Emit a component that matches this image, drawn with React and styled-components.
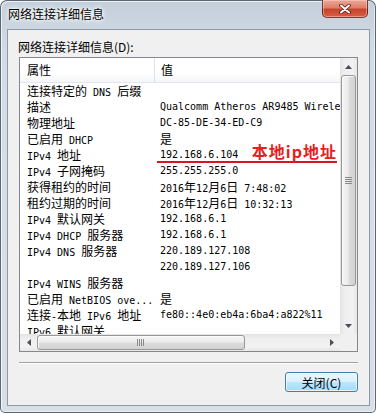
import React from 'react'
import styled, { createGlobalStyle } from 'styled-components'

const GlobalStyle = createGlobalStyle`
  html, body {
    margin: 0;
    padding: 0;
    background: #ffffff;
  }
  * {
    box-sizing: border-box;
  }
`

const CJK = '"Noto Sans CJK SC", "Noto Sans", sans-serif'
const MONO = '"DejaVu Sans Mono", "Liberation Mono", monospace'

const Window = styled.div`
  width: 376px;
  height: 413px;
  display: flex;
  flex-direction: column;
  padding: 0 5px 6px 6px;
  border: 1px solid rgba(52, 64, 78, 0.75);
  border-radius: 7px 7px 5px 5px;
  background: linear-gradient(180deg, #c3cfdb 0%, #d3dce6 12%, #d8dfe7 100%);
  box-shadow: inset 1px 1px 0 rgba(255, 255, 255, 0.7),
    inset -1px -1px 0 rgba(255, 255, 255, 0.5);
`

const TitleBar = styled.div`
  height: 28px;
  flex: none;
  display: flex;
  justify-content: space-between;
  align-items: flex-start;
`

const Title = styled.div`
  font-family: ${CJK};
  font-size: 12px;
  line-height: 26px;
  padding-left: 1px;
  color: #000;
  text-shadow: 0 0 6px #fff, 0 0 4px #fff, 0 0 2px #fff;
`

const CloseButton = styled.div`
  width: 46px;
  height: 18px;
  margin-right: 2px;
  margin-top: -1px;
  display: flex;
  align-items: center;
  justify-content: center;
  border: 1px solid rgba(70, 20, 14, 0.7);
  border-top: none;
  border-radius: 0 0 5px 5px;
  background: linear-gradient(
    180deg,
    #eaa898 0%,
    #de7f6a 45%,
    #c8442c 55%,
    #d65e44 100%
  );
  box-shadow: inset 0 0 0 1px rgba(255, 220, 210, 0.45);
`

const Client = styled.div`
  flex: 1;
  display: flex;
  flex-direction: column;
  align-items: stretch;
  padding: 9px 11px 13px 11px;
  background: #f0f0f0;
  border: 1px solid #8c9aa8;
`

const GroupLabel = styled.div`
  font-family: ${CJK};
  font-size: 12px;
  line-height: 16px;
  height: 16px;
  margin-left: -1px;
  color: #000;
`

const ListBox = styled.div`
  margin-top: 2px;
  height: 295px;
  display: grid;
  grid-template-columns: 1fr 17px;
  grid-template-rows: 1fr 17px;
  border: 1px solid #828790;
  background: #fff;
`

const ListContent = styled.div`
  display: flex;
  flex-direction: column;
  overflow: hidden;
  min-width: 0;
`

const Header = styled.div`
  height: 25px;
  flex: none;
  display: flex;
  background: linear-gradient(180deg, #ffffff 0%, #ffffff 60%, #f5f6f8 100%);
  border-bottom: 1px solid #e3e6ea;
`

const HeaderCell = styled.div`
  font-family: ${CJK};
  font-size: 12px;
  line-height: 24px;
  color: #000;
  padding-left: ${(p) => p.$pad}px;
  width: ${(p) => (p.$width ? `${p.$width}px` : 'auto')};
  flex: ${(p) => (p.$width ? 'none' : '1')};
  border-right: ${(p) => (p.$width ? '1px solid #dde2e8' : 'none')};
`

const Rows = styled.div`
  flex: 1;
  overflow: hidden;
  padding-top: 0;
`

const Row = styled.div`
  position: relative;
  height: 16px;
  display: flex;
`

const Cell = styled.div`
  font-family: ${MONO};
  font-size: 10px;
  line-height: 16px;
  color: #000;
  white-space: pre;
  overflow: hidden;
  padding-left: ${(p) => p.$pad}px;
  width: ${(p) => (p.$width ? `${p.$width}px` : 'auto')};
  flex: ${(p) => (p.$width ? 'none' : '1')};
`

const Han = styled.span`
  font-family: ${CJK};
  font-size: 12px;
  line-height: 16px;
`

const Annotation = styled.div`
  position: absolute;
  left: 137px;
  top: -4px;
  width: 180px;
  height: 20px;
  border-bottom: 2px solid #d8161b;
  text-align: right;
  font-family: ${CJK};
  font-weight: 700;
  font-size: 16px;
  line-height: 17px;
  letter-spacing: 1px;
  color: #e3221d;
`

const VScroll = styled.div`
  display: flex;
  flex-direction: column;
  background: linear-gradient(90deg, #e3e3e3 0%, #eeeeee 25%, #f2f2f2 75%, #e6e6e6 100%);
`

const HScroll = styled.div`
  display: flex;
  background: linear-gradient(180deg, #e3e3e3 0%, #eeeeee 25%, #f2f2f2 75%, #e6e6e6 100%);
`

const ArrowButton = styled.div`
  width: 17px;
  height: 17px;
  flex: none;
  display: flex;
  align-items: center;
  justify-content: center;
`

const Track = styled.div`
  flex: 1;
  display: flex;
  flex-direction: ${(p) => (p.$vertical ? 'column' : 'row')};
  padding: ${(p) => (p.$vertical ? '0 1px' : '1px 0')};
`

const Thumb = styled.div`
  flex: none;
  ${(p) =>
    p.$vertical ? `height: ${p.$size}px;` : `width: ${p.$size}px;`}
  display: flex;
  align-items: center;
  justify-content: center;
  border: 1px solid #979797;
  border-radius: 3px;
  background: linear-gradient(
    ${(p) => (p.$vertical ? '90deg' : '180deg')},
    #f6f6f6 0%,
    #ececec 45%,
    #dcdcdc 55%,
    #d2d2d2 100%
  );
  box-shadow: inset 1px 1px 0 #fbfbfb;
`

const Corner = styled.div`
  background: #f0f0f0;
`

const Separator = styled.div`
  height: 2px;
  margin-top: 10px;
  border-top: 1px solid #a0a0a0;
  border-bottom: 1px solid #ffffff;
`

const Footer = styled.div`
  margin-top: 8px;
  display: flex;
  justify-content: flex-end;
`

const Button = styled.div`
  width: 73px;
  height: 20px;
  display: flex;
  align-items: center;
  justify-content: center;
  font-family: ${CJK};
  font-size: 12px;
  color: #000;
  border: 1px solid #3c7fb1;
  border-radius: 3px;
  background: linear-gradient(
    180deg,
    #eaf6fd 0%,
    #d9f0fc 50%,
    #bee6fd 50%,
    #a7d9f5 100%
  );
  box-shadow: inset 0 0 0 1px rgba(255, 255, 255, 0.7);
`

const HAN_RE = /([\u2E80-\u9FFF\uFF00-\uFFEF]+)/

function Mixed({ text }) {
  return text
    .split(HAN_RE)
    .map((part, i) =>
      HAN_RE.test(part) ? <Han key={i}>{part}</Han> : part
    )
}

const Arrow = ({ dir }) => {
  const pts = {
    up: '0,4 3.5,0 7,4',
    down: '0,0 7,0 3.5,4',
    left: '4,0 4,7 0,3.5',
    right: '0,0 4,3.5 0,7',
  }[dir]
  const vertical = dir === 'up' || dir === 'down'
  return (
    <svg width={vertical ? 7 : 4} height={vertical ? 4 : 7}>
      <polygon points={pts} fill="#4a4f57" />
    </svg>
  )
}

const Grip = ({ vertical }) =>
  vertical ? (
    <svg width="7" height="8">
      {[0, 2, 4, 6].map((y) => (
        <line key={y} x1="0" x2="7" y1={y + 0.5} y2={y + 0.5} stroke="#8a8a8a" />
      ))}
    </svg>
  ) : (
    <svg width="8" height="7">
      {[0, 2, 4, 6].map((x) => (
        <line key={x} y1="0" y2="7" x1={x + 0.5} x2={x + 0.5} stroke="#8a8a8a" />
      ))}
    </svg>
  )

const rows = [
  ['连接特定的 DNS 后缀', ''],
  ['描述', 'Qualcomm Atheros AR9485 Wireless Network Adapter'],
  ['物理地址', 'DC-85-DE-34-ED-C9'],
  ['已启用 DHCP', '是'],
  ['IPv4 地址', '192.168.6.104', '本地ip地址'],
  ['IPv4 子网掩码', '255.255.255.0'],
  ['获得租约的时间', '2016年12月6日 7:48:02'],
  ['租约过期的时间', '2016年12月6日 10:32:13'],
  ['IPv4 默认网关', '192.168.6.1'],
  ['IPv4 DHCP 服务器', '192.168.6.1'],
  ['IPv4 DNS 服务器', '220.189.127.108'],
  ['', '220.189.127.106'],
  ['IPv4 WINS 服务器', ''],
  ['已启用 NetBIOS ove...', '是'],
  ['连接-本地 IPv6 地址', 'fe80::4e0:eb4a:6ba4:a822%11'],
  ['IPv6 默认网关', ''],
]

export default function App() {
  return (
    <>
      <GlobalStyle />
      <Window>
        <TitleBar>
          <Title>网络连接详细信息</Title>
          <CloseButton>
            <svg width="12" height="10" viewBox="0 0 12 10">
              <path
                d="M2 1.5 L10 8.5 M10 1.5 L2 8.5"
                stroke="#5a1a12"
                strokeWidth="3.6"
                strokeLinecap="round"
              />
              <path
                d="M2 1.5 L10 8.5 M10 1.5 L2 8.5"
                stroke="#ffffff"
                strokeWidth="2"
                strokeLinecap="round"
              />
            </svg>
          </CloseButton>
        </TitleBar>
        <Client>
          <GroupLabel>网络连接详细信息(D):</GroupLabel>
          <ListBox>
            <ListContent>
              <Header>
                <HeaderCell $width={135} $pad={7}>
                  属性
                </HeaderCell>
                <HeaderCell $pad={6}>值</HeaderCell>
              </Header>
              <Rows>
                {rows.map(([name, value, note], i) => (
                  <Row key={i}>
                    <Cell $width={135} $pad={7}>
                      <Mixed text={name} />
                    </Cell>
                    <Cell $pad={5}>
                      <Mixed text={value} />
                    </Cell>
                    {note && <Annotation>{note}</Annotation>}
                  </Row>
                ))}
              </Rows>
            </ListContent>
            <VScroll>
              <ArrowButton>
                <Arrow dir="up" />
              </ArrowButton>
              <Track $vertical>
                <Thumb $vertical $size={211}>
                  <Grip vertical />
                </Thumb>
              </Track>
              <ArrowButton>
                <Arrow dir="down" />
              </ArrowButton>
            </VScroll>
            <HScroll>
              <ArrowButton>
                <Arrow dir="left" />
              </ArrowButton>
              <Track>
                <Thumb $size={208}>
                  <Grip />
                </Thumb>
              </Track>
              <ArrowButton>
                <Arrow dir="right" />
              </ArrowButton>
            </HScroll>
            <Corner />
          </ListBox>
          <Separator />
          <Footer>
            <Button>关闭(C)</Button>
          </Footer>
        </Client>
      </Window>
    </>
  )
}
